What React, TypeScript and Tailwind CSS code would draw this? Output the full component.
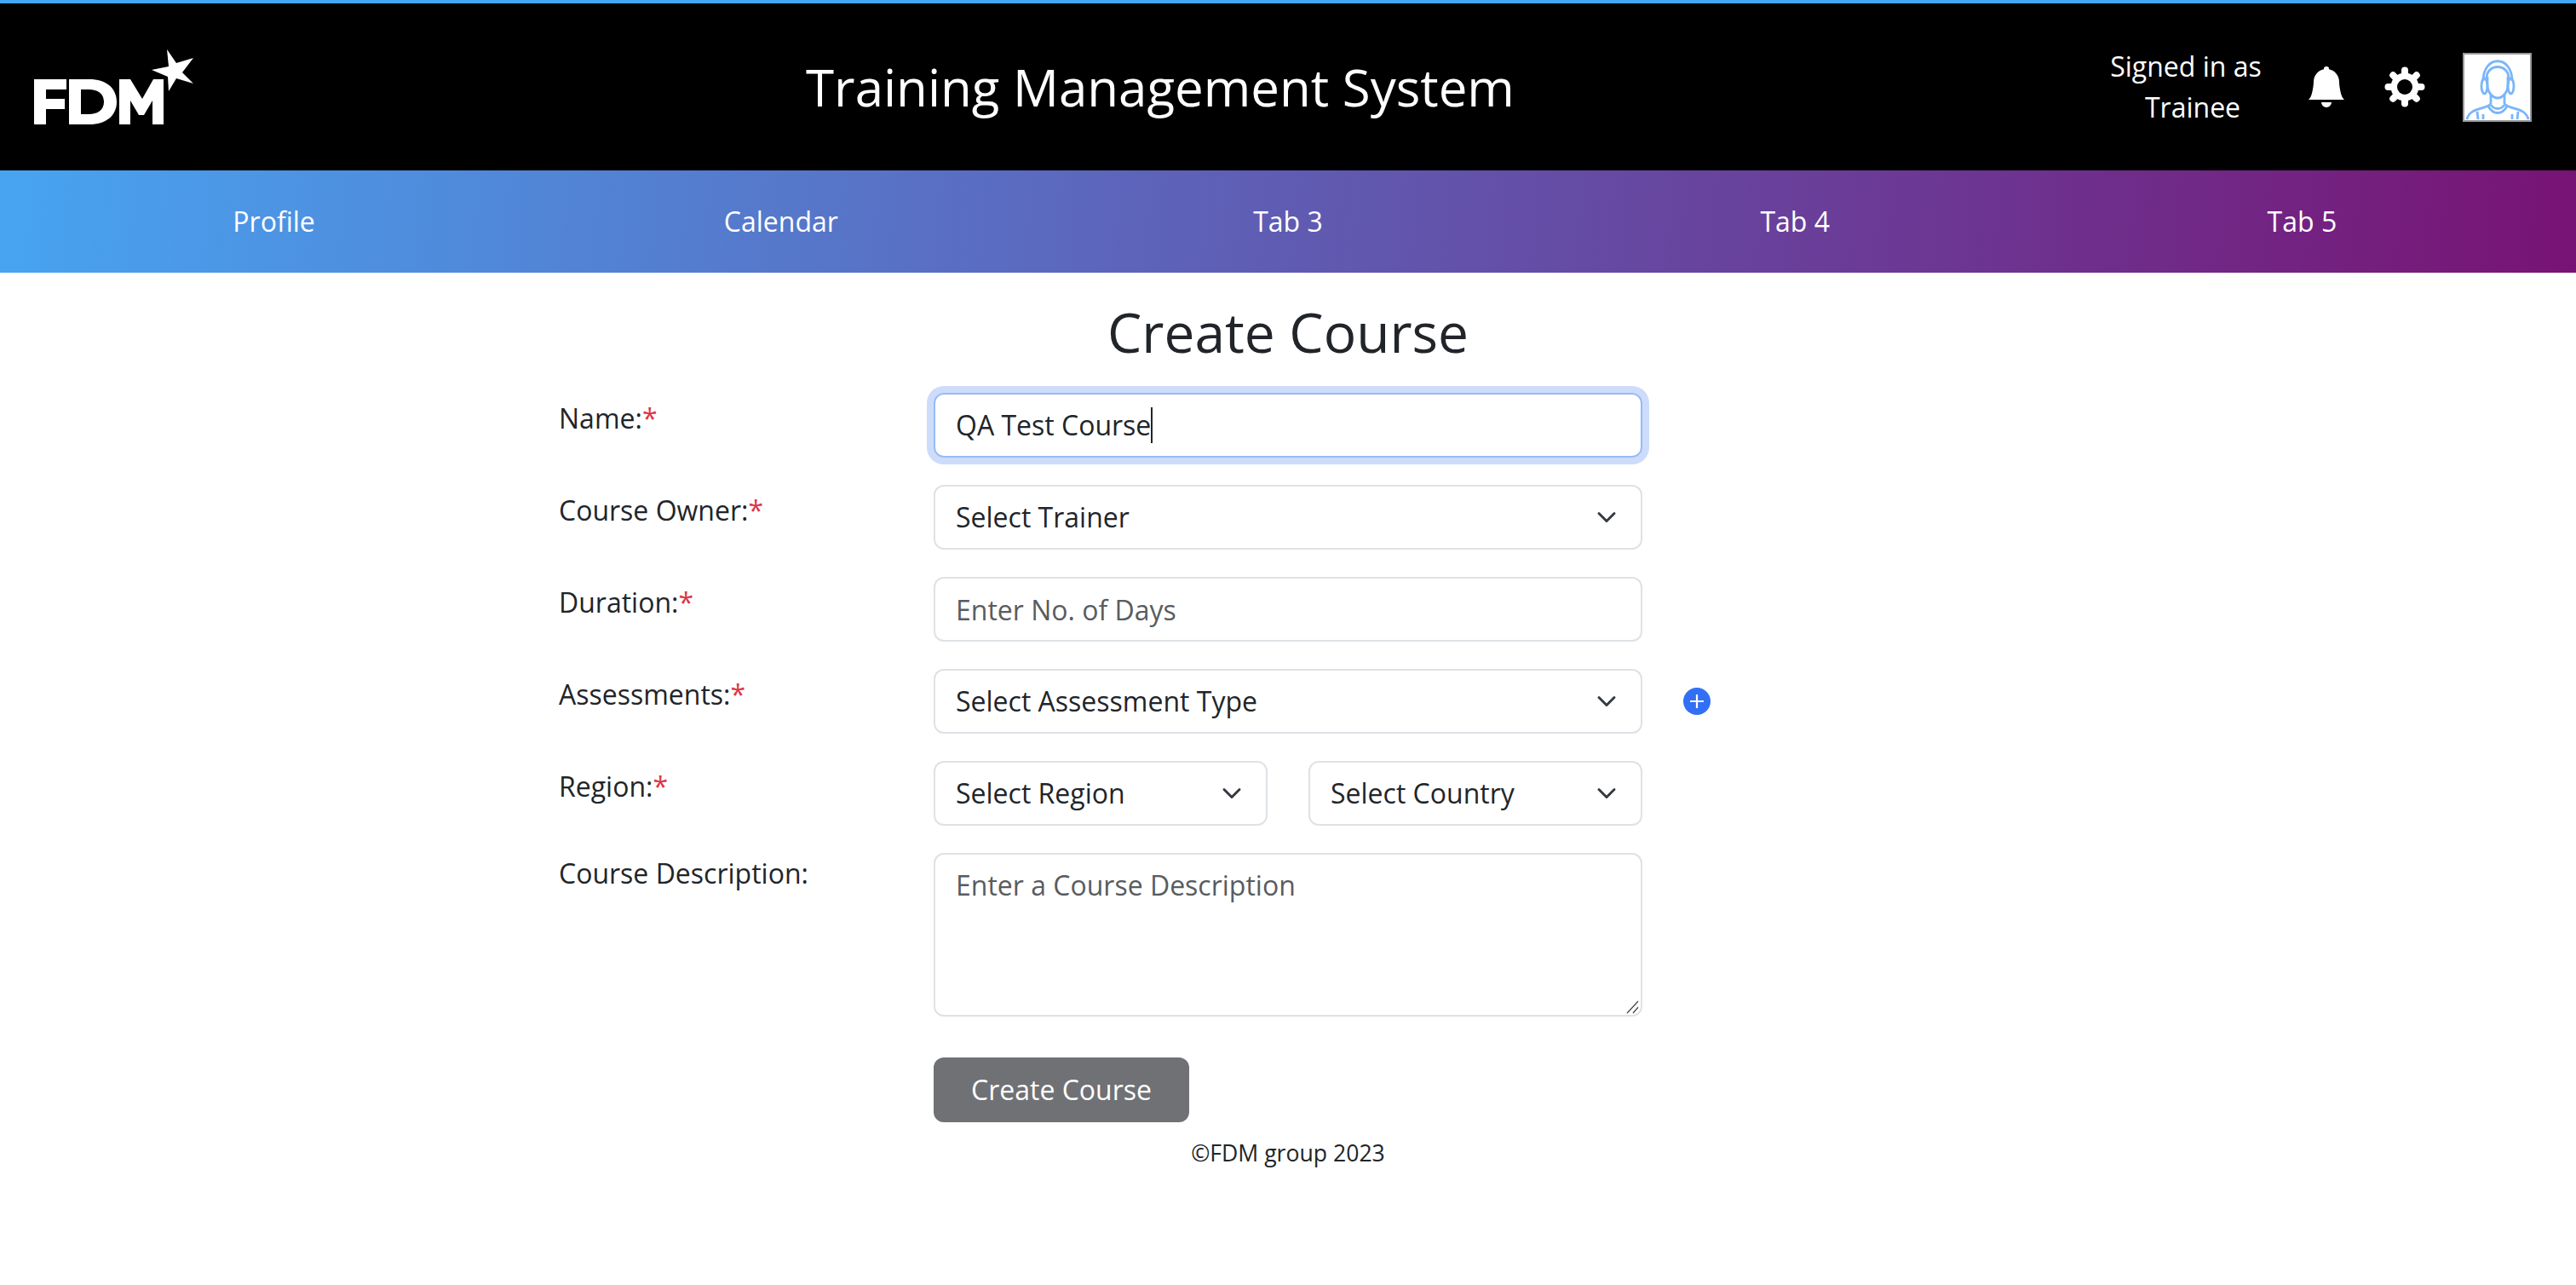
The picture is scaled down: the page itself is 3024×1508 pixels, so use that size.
import { BsBellFill } from "react-icons/bs";

const Star = () => <span className="text-[#dc3545]">*</span>;

function Logo() {
  return (
    <svg width="188" height="90" viewBox="0 0 188 90" className="shrink-0">
      <path fill="#fff" d="M0 36h38v12H14v11h22v12H14v18H0z" />
      <path fill="#fff" fillRule="evenodd" d="M41 36h24c19 0 32 10 32 26.500S84 89 65 89H41zM55 48v29h9c11 0 18-5 18-14.500S75 48 64 48z" />
      <path fill="#fff" d="M100 89V36h13l14 23 13-23h12v53h-13V61l-10 17h-6l-10-17v28z" />
      <path fill="#fff" d="M156 1l11 16 20-6-13 17 13 13-20-6-9 15-1-17-19-8 20-4z" />
    </svg>
  );
}

function Gear() {
  const angles = [0, 45, 90, 135, 180, 225, 270, 315];
  return (
    <svg width="48" height="48" viewBox="0 0 48 48" className="shrink-0">
      {angles.map((a) => (
        <line key={a} x1="24" y1="16" x2="24" y2="4.500" stroke="#fff" strokeWidth="8" strokeLinecap="round" transform={`rotate(${a} 24 24)`} />
      ))}
      <circle cx="24" cy="24" r="16.500" fill="#fff" />
      <circle cx="24" cy="24" r="9" fill="#000" />
    </svg>
  );
}

function Avatar() {
  return (
    <div className="w-[81px] h-[81px] border-2 border-[#999] bg-white shrink-0 overflow-hidden">
      <svg viewBox="0 0 77 77" className="w-full h-full" fill="none" stroke="#7ab6f9" strokeWidth="2.800">
        <path d="M22 31C22 0 56 0 56 31" />
        <path d="M26 28C26 10 52 10 52 28" />
        <path d="M27 26v10c0 8 6 15 12 15s12-7 12-15V26" />
        <ellipse cx="23.500" cy="37" rx="3.500" ry="9" />
        <ellipse cx="54.500" cy="37" rx="3.500" ry="9" />
        <path d="M31 47v11M47 47v11" />
        <path d="M31 58C24 65 6 62 3 76M47 58C54 65 72 62 75 76" />
        <path d="M28 61c6 10 16 10 22 0M31 59c4 6 12 6 16 0" />
        <path d="M15 67l1 9M22 70v6M63 67l-1 9M56 70v6" />
      </svg>
    </div>
  );
}

function Select({ label }: { label: string }) {
  return (
    <div className="h-[76px] flex items-center justify-between pl-[24px] pr-[28px] border-2 border-[#dee2e6] rounded-[12px] bg-white text-[#212529]">
      <span>{label}</span>
      <svg viewBox="0 0 16 16" className="w-[24px] h-[24px] shrink-0" fill="none" stroke="#343a40" strokeWidth="2" strokeLinecap="round" strokeLinejoin="round">
        <path d="m2 5 6 6 6-6" />
      </svg>
    </div>
  );
}

function Row({ label, required = true, children, extra, labelClass = "pt-[6px]" }: { label: string; required?: boolean; children: React.ReactNode; extra?: React.ReactNode; labelClass?: string }) {
  return (
    <div className="flex items-start">
      <label className={`w-[440px] shrink-0 text-[#212529] leading-[48px] ${labelClass}`}>
        {label}
        {required && <Star />}
      </label>
      <div className="w-[832px] shrink-0">{children}</div>
      {extra}
    </div>
  );
}

export default function App() {
  return (
    <div className="min-h-[1508px] bg-white text-[32px] text-[#212529] font-['Open_Sans',sans-serif]">
      <div className="h-[4px] bg-[#45a5f5]" />
      <header className="h-[196px] bg-black text-white flex items-center pl-[40px] pr-[52px]">
        <div className="w-[188px]"><Logo /></div>
        <h1 className="flex-1 text-center text-[60px] font-normal leading-none pl-[20px]">Training Management System</h1>
        <div className="flex items-center">
          <div className="text-center leading-[48px] w-[180px]">Signed in as<br /><span className="inline-block pl-[16px]">Trainee</span></div>
          <BsBellFill className="w-[48px] h-[48px] ml-[51px]" />
          <div className="ml-[44px]"><Gear /></div>
          <div className="ml-[44px]"><Avatar /></div>
        </div>
      </header>
      <nav className="h-[120px] flex items-center px-[24px] text-white bg-[linear-gradient(95deg,#47a4f1,#781374)]">
        {["Profile", "Calendar", "Tab 3", "Tab 4", "Tab 5"].map((t) => (
          <div key={t} className="flex-1 text-center">{t}</div>
        ))}
      </nav>
      <main className="pl-[656px]">
        <h2 className="w-[1712px] text-center text-[64px] font-medium leading-[77px] pt-[31px] pb-[33px]">Create Course</h2>
        <div className="flex flex-col gap-[32px]">
          <Row label="Name:">
            <div className="h-[76px] flex items-center px-[24px] border-2 border-[#98b9f8] rounded-[12px] shadow-[0_0_0_8px_#cddcfa]">
              <span>QA Test Course</span><span className="w-[2px] h-[42px] bg-[#212529]" />
            </div>
          </Row>
          <Row label="Course Owner:"><Select label="Select Trainer" /></Row>
          <Row label="Duration:">
            <input readOnly placeholder="Enter No. of Days" className="w-full h-[76px] px-[24px] border-2 border-[#dee2e6] rounded-[12px] outline-none placeholder:text-[#595c5f]" />
          </Row>
          <Row label="Assessments:" extra={
            <div className="ml-[48px] mt-[22px] w-[32px] h-[32px] rounded-full bg-[#326ff5] flex items-center justify-center">
              <svg width="16" height="16" viewBox="0 0 16 16" stroke="#fff" strokeWidth="2.200"><path d="M8 0v16M0 8h16" /></svg>
            </div>
          }><Select label="Select Assessment Type" /></Row>
          <Row label="Region:">
            <div className="grid grid-cols-2 gap-[48px]">
              <Select label="Select Region" />
              <Select label="Select Country" />
            </div>
          </Row>
          <Row label="Course Description:" required={false} labelClass="pt-0">
            <div className="relative">
              <textarea readOnly placeholder="Enter a Course Description" className="block w-full h-[192px] px-[24px] py-[12px] border-2 border-[#dee2e6] rounded-[12px] outline-none resize-none placeholder:text-[#595c5f]" />
              <svg width="16" height="16" viewBox="0 0 16 16" className="absolute right-[3px] bottom-[3px]" stroke="#444" strokeWidth="1.200"><path d="M1 15 14 1M8 15l6-7" /></svg>
            </div>
          </Row>
          <div className="pl-[440px] pt-[16px]">
            <button className="w-[300px] h-[76px] rounded-[12px] bg-[#707175] text-white">Create Course</button>
          </div>
        </div>
      </main>
      <footer className="text-center text-[26.6px] leading-[40px] pt-[16px]">©FDM group 2023</footer>
    </div>
  );
}
